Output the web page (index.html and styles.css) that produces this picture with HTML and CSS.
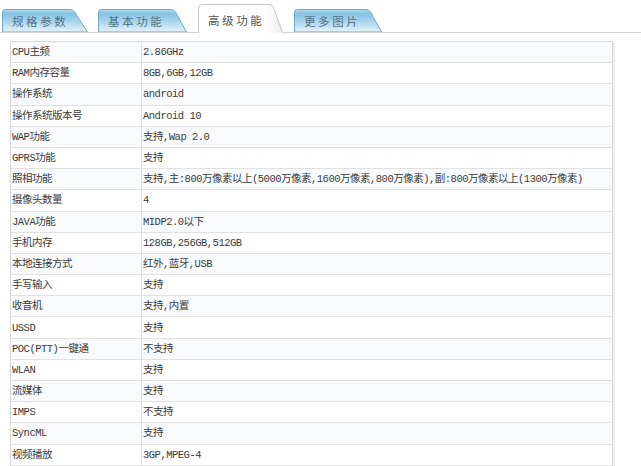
FILE: index.html
```html
<!DOCTYPE html>
<html lang="zh-CN">
<head>
<meta charset="utf-8">
<title>高级功能</title>
<link rel="stylesheet" href="styles.css">
</head>
<body>
<div class="tabs">
  <div class="tab tab-1">
    <svg class="tab-shape" width="86" height="23" viewBox="0 0 86 23" aria-hidden="true">
      <defs>
        <linearGradient id="tabBlue" x1="0" y1="0" x2="0" y2="1">
          <stop offset="0" stop-color="#b4dcf0"/>
          <stop offset="0.18" stop-color="#86c2e4"/>
          <stop offset="0.45" stop-color="#9fd0ea"/>
          <stop offset="1" stop-color="#e4f3f9"/>
        </linearGradient>
        <linearGradient id="tabGrey" x1="0" y1="0" x2="1" y2="0">
          <stop offset="0" stop-color="#ffffff"/>
          <stop offset="0.8" stop-color="#ffffff"/>
          <stop offset="1" stop-color="#ececec"/>
        </linearGradient>
      </defs>
      <path d="M0.5 23V3.5Q0.5 0.5 3.5 0.5H68Q71 0.5 72.5 3L85.5 23Z" fill="url(#tabBlue)" stroke="#6fa8cb"/>
    </svg>
    <span class="tab-label">规格参数</span>
  </div>
  <div class="tab tab-2">
    <svg class="tab-shape" width="90" height="23" viewBox="0 0 90 23" aria-hidden="true">
      <path d="M0.5 23V3.5Q0.5 0.5 3.5 0.5H73Q76 0.5 77.5 3L88.5 23Z" fill="url(#tabBlue)" stroke="#6fa8cb"/>
    </svg>
    <span class="tab-label">基本功能</span>
  </div>
  <div class="tab tab-active">
    <svg class="tab-shape" width="86" height="29" viewBox="0 0 86 29" aria-hidden="true">
      <path d="M0.5 29V4Q0.5 0.5 4 0.5H71Q74 0.5 75.5 3.5L84.5 28.5V29Z" fill="url(#tabGrey)"/>
      <path d="M0.5 29V4Q0.5 0.5 4 0.5H71Q74 0.5 75.5 3.5L84.5 28.5" fill="none" stroke="#c6c6c6"/>
    </svg>
    <span class="tab-label">高级功能</span>
  </div>
  <div class="tab tab-4">
    <svg class="tab-shape" width="88" height="23" viewBox="0 0 88 23" aria-hidden="true">
      <path d="M0.5 23V3.5Q0.5 0.5 3.5 0.5H72Q75 0.5 76.5 3L87.5 23Z" fill="url(#tabBlue)" stroke="#6fa8cb"/>
    </svg>
    <span class="tab-label">更多图片</span>
  </div>
</div>

<div class="spec">
  <div class="row"><div class="cell key">CPU主频</div><div class="cell val">2.86GHz</div></div>
  <div class="row"><div class="cell key">RAM内存容量</div><div class="cell val">8GB,6GB,12GB</div></div>
  <div class="row"><div class="cell key">操作系统</div><div class="cell val">android</div></div>
  <div class="row"><div class="cell key">操作系统版本号</div><div class="cell val">Android 10</div></div>
  <div class="row"><div class="cell key">WAP功能</div><div class="cell val">支持,Wap 2.0</div></div>
  <div class="row"><div class="cell key">GPRS功能</div><div class="cell val">支持</div></div>
  <div class="row"><div class="cell key">照相功能</div><div class="cell val">支持,主:800万像素以上(5000万像素,1600万像素,800万像素),副:800万像素以上(1300万像素)</div></div>
  <div class="row"><div class="cell key">摄像头数量</div><div class="cell val">4</div></div>
  <div class="row"><div class="cell key">JAVA功能</div><div class="cell val">MIDP2.0以下</div></div>
  <div class="row"><div class="cell key">手机内存</div><div class="cell val">128GB,256GB,512GB</div></div>
  <div class="row"><div class="cell key">本地连接方式</div><div class="cell val">红外,蓝牙,USB</div></div>
  <div class="row"><div class="cell key">手写输入</div><div class="cell val">支持</div></div>
  <div class="row"><div class="cell key">收音机</div><div class="cell val">支持,内置</div></div>
  <div class="row"><div class="cell key">USSD</div><div class="cell val">支持</div></div>
  <div class="row"><div class="cell key">POC(PTT)一键通</div><div class="cell val">不支持</div></div>
  <div class="row"><div class="cell key">WLAN</div><div class="cell val">支持</div></div>
  <div class="row"><div class="cell key">流媒体</div><div class="cell val">支持</div></div>
  <div class="row"><div class="cell key">IMPS</div><div class="cell val">不支持</div></div>
  <div class="row"><div class="cell key">SyncML</div><div class="cell val">支持</div></div>
  <div class="row"><div class="cell key">视频播放</div><div class="cell val">3GP,MPEG-4</div></div>
</div>
</body>
</html>
```

FILE: styles.css
```css
html, body {
  margin: 0;
  padding: 0;
  background: #ffffff;
}

body {
  font-family: "Liberation Mono", "Noto Sans CJK SC", monospace;
  color: #3a3a3a;
  overflow: hidden;
}

.tabs {
  display: flex;
  align-items: flex-end;
  gap: 10px;
  height: 28px;
  padding: 4px 0 0 2px;
  border-bottom: 1px solid #d3d3d3;
}

.tab {
  display: grid;
  height: 23px;
}

.tab-1 { width: 86px; }
.tab-2 { width: 90px; }
.tab-4 { width: 88px; }

.tab-active {
  width: 86px;
  height: 29px;
  margin-bottom: -1px;
}

.tab-shape,
.tab-label {
  grid-area: 1 / 1;
}

.tab-shape {
  display: block;
}

.tab-label {
  align-self: center;
  padding-left: 10px;
  font-family: "Noto Sans CJK SC", sans-serif;
  font-size: 11.5px;
  line-height: 14px;
  letter-spacing: 2.6px;
  color: #557389;
}

.tab-active .tab-label {
  padding-top: 3px;
  color: #555555;
}

.spec {
  display: grid;
  grid-template-columns: 131px 1fr;
  grid-auto-rows: 21.2px;
  width: 603px;
  box-sizing: border-box;
  margin: 8px 0 0 10px;
  border: 1px solid #d8d8d8;
  box-shadow: 2px 0 0 #efefef;
}

.row {
  display: contents;
}

.cell {
  display: flex;
  align-items: center;
  box-sizing: border-box;
  padding-left: 1px;
  border-bottom: 1px solid #e1e1e1;
  font-size: 10.5px;
  letter-spacing: -0.5px;
  line-height: 14px;
  white-space: nowrap;
  overflow: hidden;
}

.key {
  border-right: 1px solid #e1e1e1;
}

.row:nth-child(odd) .cell {
  background: #f9fafc;
}
```
